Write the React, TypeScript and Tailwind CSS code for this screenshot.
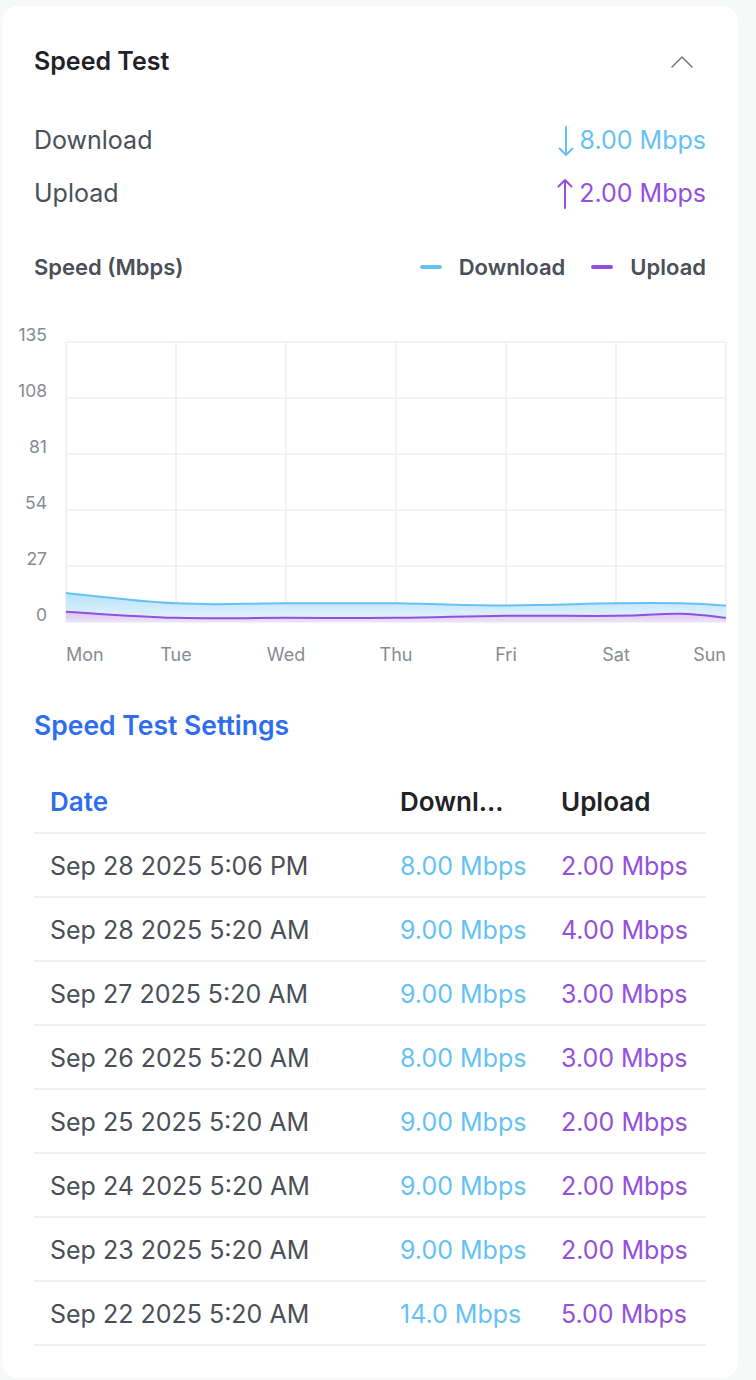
import React from "react";

const FONT = { fontFamily: "Inter, 'Open Sans', Arial, sans-serif" };

type Row = { date: string; down: string; up: string };

const rows: Row[] = [
  { date: "Sep 28 2025 5:06 PM", down: "8.00 Mbps", up: "2.00 Mbps" },
  { date: "Sep 28 2025 5:20 AM", down: "9.00 Mbps", up: "4.00 Mbps" },
  { date: "Sep 27 2025 5:20 AM", down: "9.00 Mbps", up: "3.00 Mbps" },
  { date: "Sep 26 2025 5:20 AM", down: "8.00 Mbps", up: "3.00 Mbps" },
  { date: "Sep 25 2025 5:20 AM", down: "9.00 Mbps", up: "2.00 Mbps" },
  { date: "Sep 24 2025 5:20 AM", down: "9.00 Mbps", up: "2.00 Mbps" },
  { date: "Sep 23 2025 5:20 AM", down: "9.00 Mbps", up: "2.00 Mbps" },
  { date: "Sep 22 2025 5:20 AM", down: "14.0 Mbps", up: "5.00 Mbps" },
];

// chart geometry (svg coords)
const PL = 56;
const PR = 716;
const PT = 22;
const PB = 302;
const MAX = 135;
const days = ["Mon", "Tue", "Wed", "Thu", "Fri", "Sat", "Sun"];
const ticks = [135, 108, 81, 54, 27, 0];

const xAt = (i: number) => PL + ((PR - PL) / 6) * i;
const yAt = (v: number) => PB - (v / MAX) * (PB - PT);

// smooth path through points (catmull-rom -> bezier)
function smooth(pts: [number, number][]) {
  let d = `M${pts[0][0]},${pts[0][1]}`;
  for (let i = 0; i < pts.length - 1; i++) {
    const p0 = pts[i - 1] || pts[i];
    const p1 = pts[i];
    const p2 = pts[i + 1];
    const p3 = pts[i + 2] || p2;
    const t = 0.2;
    const c1x = p1[0] + (p2[0] - p0[0]) * t;
    const c1y = p1[1] + (p2[1] - p0[1]) * t;
    const c2x = p2[0] - (p3[0] - p1[0]) * t;
    const c2y = p2[1] - (p3[1] - p1[1]) * t;
    d += ` C${c1x},${c1y} ${c2x},${c2y} ${p2[0]},${p2[1]}`;
  }
  return d;
}

const downPts: [number, number][] = [
  [xAt(0), yAt(14)],
  [xAt(1), yAt(9)],
  [xAt(2), yAt(9)],
  [xAt(3), yAt(9)],
  [xAt(4), yAt(8)],
  [xAt(5), yAt(9)],
  [670, yAt(9)],
  [xAt(6), yAt(8)],
];

const upPts: [number, number][] = [
  [xAt(0), yAt(5)],
  [xAt(1), yAt(2)],
  [xAt(2), yAt(2)],
  [xAt(3), yAt(2)],
  [xAt(4), yAt(3)],
  [xAt(5), yAt(3)],
  [670, yAt(4)],
  [xAt(6), yAt(2)],
];

function SpeedChart() {
  const downLine = smooth(downPts);
  const upLine = smooth(upPts);
  return (
    <svg width="720" height="360" viewBox="0 0 720 360" className="block">
      <defs>
        <linearGradient id="dl" x1="0" y1="0" x2="0" y2="1">
          <stop offset="0%" stopColor="#b9e2fb" />
          <stop offset="100%" stopColor="#e6f5fe" />
        </linearGradient>
        <linearGradient id="ul" x1="0" y1="0" x2="0" y2="1">
          <stop offset="0%" stopColor="#d9c4f3" />
          <stop offset="100%" stopColor="#ece3f9" />
        </linearGradient>
      </defs>
      {/* grid */}
      {ticks.map((t, i) => (
        <line key={t} x1={PL} x2={PR} y1={PT + i * 56} y2={PT + i * 56} stroke="#eeeff1" strokeWidth="1.5" />
      ))}
      {days.map((d, i) => (
        <line key={d} x1={xAt(i)} x2={xAt(i)} y1={PT} y2={PB} stroke="#eeeff1" strokeWidth="1.5" />
      ))}
      {/* areas */}
      <path d={`${downLine} L${PR},${PB} L${PL},${PB} Z`} fill="url(#dl)" />
      <path d={`${upLine} L${PR},${PB} L${PL},${PB} Z`} fill="url(#ul)" />
      <path d={downLine} fill="none" stroke="#66c1f5" strokeWidth="2" />
      <path d={upLine} fill="none" stroke="#9450dc" strokeWidth="2" />
      {/* y labels */}
      {ticks.map((t, i) => (
        <text
          key={t}
          x={37}
          y={PT + i * 56 - 6}
          textAnchor="end"
          dominantBaseline="middle"
          fill="#878b93"
          fontSize="17.5"
          style={FONT}
        >
          {t}
        </text>
      ))}
      {/* x labels */}
      {days.map((d, i) => (
        <text
          key={d}
          x={xAt(i)}
          y={336}
          textAnchor={i === 0 ? "start" : i === 6 ? "end" : "middle"}
          dominantBaseline="middle"
          fill="#878b93"
          fontSize="18"
          style={FONT}
        >
          {d}
        </text>
      ))}
    </svg>
  );
}

function ArrowDown() {
  return (
    <svg width="18" height="32" viewBox="0 0 18 32" fill="none" stroke="currentColor" strokeWidth="2" strokeLinecap="round" strokeLinejoin="round">
      <path d="M9 2v28M2.5 23.5L9 30l6.5-6.5" />
    </svg>
  );
}

function ArrowUp() {
  return (
    <svg width="18" height="32" viewBox="0 0 18 32" fill="none" stroke="currentColor" strokeWidth="2" strokeLinecap="round" strokeLinejoin="round">
      <path d="M9 30V2M2.5 8.5L9 2l6.5 6.5" />
    </svg>
  );
}

export default function App() {
  return (
    <div className="min-h-[1380px] bg-[#f7f8f8] pl-[2px] pt-[6px]" style={FONT}>
      <div className="w-[736px] rounded-2xl bg-white px-8 pt-8 pb-8">
        {/* header */}
        <div className="flex h-12 items-center justify-between">
          <h2 className="text-[25px] font-semibold text-[#1f2226]">Speed Test</h2>
          <svg width="24" height="14" viewBox="0 0 24 14" fill="none" stroke="#73777f" strokeWidth="1.5" strokeLinecap="round" strokeLinejoin="round" className="mr-3">
            <path d="M2 12L12 2l10 10" />
          </svg>
        </div>

        {/* current values */}
        <div className="mt-[35px] flex flex-col gap-[13px]">
          <div className="flex h-10 items-center justify-between text-[25px]">
            <span className="text-[#4a4f57]">Download</span>
            <span className="flex items-center gap-[5px] text-[#66c1f5]">
              <ArrowDown />
              8.00 Mbps
            </span>
          </div>
          <div className="flex h-10 items-center justify-between text-[25px]">
            <span className="text-[#4a4f57]">Upload</span>
            <span className="flex items-center gap-[5px] text-[#9450dc]">
              <ArrowUp />
              2.00 Mbps
            </span>
          </div>
        </div>

        {/* legend */}
        <div className="mt-[37px] flex h-8 items-center justify-between text-[22px] font-semibold text-[#4a4f57]">
          <span>Speed (Mbps)</span>
          <div className="flex items-center">
            <span className="h-1 w-[22px] rounded-full bg-[#66c1f5]" />
            <span className="ml-[17px]">Download</span>
            <span className="ml-[26px] h-1 w-[22px] rounded-full bg-[#9450dc]" />
            <span className="ml-[17px]">Upload</span>
          </div>
        </div>

        {/* chart */}
        <div className="-mx-6 mt-[37px]">
          <SpeedChart />
        </div>

        <h3 className="mt-[30px] flex h-8 items-center text-[26.5px] font-semibold text-[#2f6df0]">Speed Test Settings</h3>

        {/* table */}
        <table className="mt-[27px] w-full table-fixed border-collapse text-[25px]">
          <colgroup>
            <col className="w-[350px]" />
            <col className="w-[161px]" />
            <col className="w-[161px]" />
          </colgroup>
          <thead>
            <tr className="h-16 border-b-2 border-[#eeeff1] text-left text-[26px]">
              <th className="px-4 pt-0.5 font-semibold text-[#2f6df0]">Date</th>
              <th className="truncate px-4 pt-0.5 font-semibold text-[#1f2226]">Downl...</th>
              <th className="px-4 pt-0.5 font-semibold text-[#1f2226]">Upload</th>
            </tr>
          </thead>
          <tbody>
            {rows.map((r, i) => (
              <tr key={i} className="h-16 border-b-2 border-[#eeeff1]">
                <td className="px-4 pt-1 text-[#4a4f57]">{r.date}</td>
                <td className="px-4 pt-1 text-[#66c1f5]">{r.down}</td>
                <td className="px-4 pt-1 text-[#9450dc]">{r.up}</td>
              </tr>
            ))}
          </tbody>
        </table>
      </div>
    </div>
  );
}
